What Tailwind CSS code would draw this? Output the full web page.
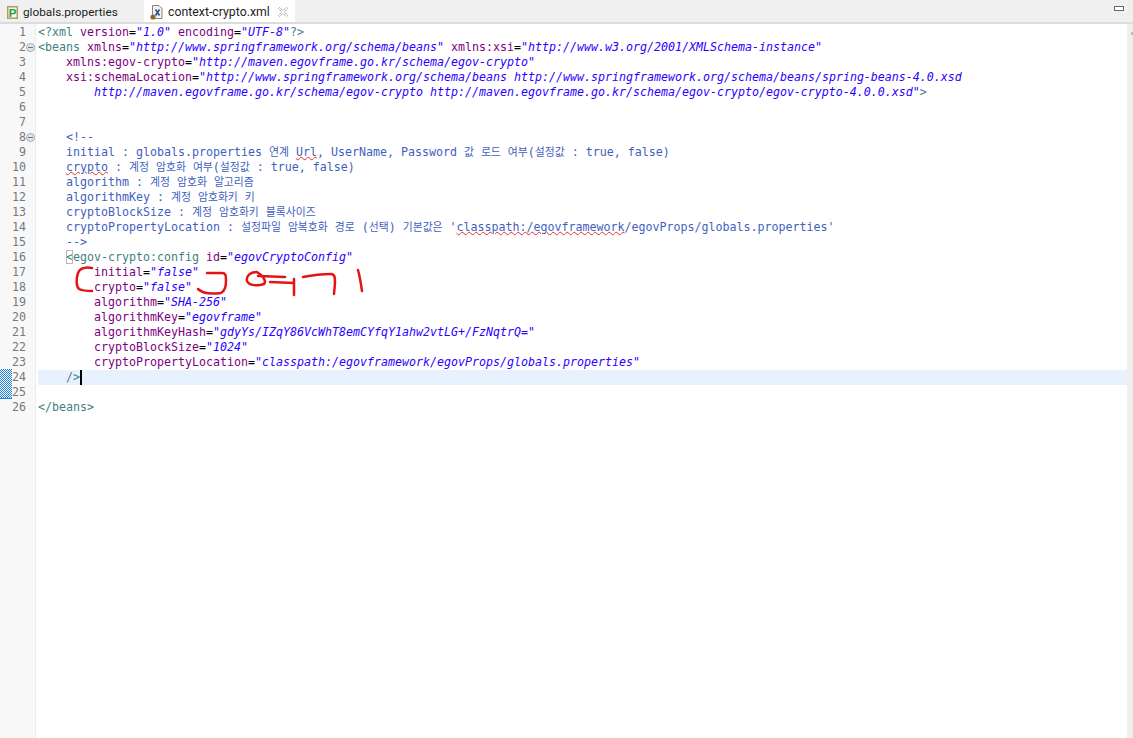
<!DOCTYPE html>
<html lang="ko">
  <head>
    <meta charset="UTF-8" />
    <title>context-crypto.xml</title>
    <script src="https://cdn.jsdelivr.net/npm/@tailwindcss/browser@4"></script>
  </head>
  <body class="h-[738px] w-[1133px] overflow-hidden bg-white">
    <!-- tab bar -->
    <div class="flex h-6 items-stretch justify-between border-b-2 border-[#dcdcdc] bg-[#f0f0f0] font-['Roboto',sans-serif] text-[#1e1e1e]">
      <div class="flex">
        <div class="flex w-[144px] items-center pl-[7px] text-[11.8px]">
          <svg class="mt-[2px]" width="11" height="13" viewBox="0 0 11 13"><path d="M.75.75h9.500v11.500H.75z" fill="#fbfaf2" stroke="#b09a60" stroke-width="1.500"/><text x="1.800" y="10.800" font-family="Liberation Sans" font-size="11.500" font-weight="700" fill="#18a030">P</text></svg>
          <span class="ml-[5px] mt-[3px]">globals.properties</span>
        </div>
        <div class="flex w-[151px] items-center bg-white pl-[6px] text-[12.3px]">
          <svg class="mt-px" width="14" height="16" viewBox="0 0 14 16"><path d="M2.500 1.500h6.500l3 3v10h-9.500z" fill="#f2f3f0" stroke="#8f8668"/><path d="M5.500 5.500l4 6M9.500 5.500l-4 6" stroke="#2b4f8a" stroke-width="1.600"/><circle cx="3" cy="13" r="2.600" fill="#9a5f32"/></svg>
          <span class="ml-[4px] mt-[3px]">context-crypto.xml</span>
          <svg class="ml-[8px] mt-[2px]" width="10" height="10" viewBox="0 0 10 10"><path d="M1.500.5L5 3.500 8.500.5l1 1L6.500 5l3 3.500-1 1L5 6.500 1.500 9.500l-1-1L3.500 5 .5 1.500z" fill="#fff" stroke="#8a8a8a" stroke-width=".8" stroke-dasharray="1.500 .6"/></svg>
        </div>
      </div>
      <div class="flex items-start pr-[9px] pt-[6px]">
        <div class="h-[5px] w-[10px] border border-[#666666] bg-white"></div>
      </div>
    </div>

    <!-- editor -->
    <div class="relative flex h-[714px] font-['DejaVu_Sans_Mono','Noto_Sans_CJK_KR',monospace] text-[11.63px] leading-[15px]">
      <!-- left ruler -->
      <div class="w-3 bg-[#f8f8f8] pt-[345px]">
        <div class="h-[30px] border-b border-[#1f80e8] bg-[repeating-conic-gradient(#1f80e8_0_25%,#ffffff_0_50%)] bg-[length:2px_2px]"></div>
      </div>
      <!-- line numbers -->
      <div class="w-[14px] bg-[#f8f8f8] pt-px text-right text-[#787878]">
        <div>1</div><div>2</div><div>3</div><div>4</div><div>5</div><div>6</div><div>7</div><div>8</div><div>9</div><div>10</div><div>11</div><div>12</div><div>13</div>
        <div>14</div><div>15</div><div>16</div><div>17</div><div>18</div><div>19</div><div>20</div><div>21</div><div>22</div><div>23</div><div>24</div><div>25</div><div>26</div>
      </div>
      <!-- folding -->
      <div class="w-[10px] border-r border-[#ececec] bg-[#f8f8f8] pt-4">
        <div class="flex h-[15px] items-center"><div class="flex size-[9px] items-center justify-center rounded-full border border-[#a0acb8] bg-[#dfe5ea]"><div class="h-px w-[5px] bg-[#66727e]"></div></div></div>
        <div class="mt-[75px] flex h-[15px] items-center"><div class="flex size-[9px] items-center justify-center rounded-full border border-[#a0acb8] bg-[#dfe5ea]"><div class="h-px w-[5px] bg-[#66727e]"></div></div></div>
      </div>
      <!-- code -->
      <div class="ml-0.5 flex flex-1 flex-col pt-px whitespace-pre text-[#3f5fbf]">
        <div class="h-[15px] text-[#3f7f7f]">&lt;?xml <span class="text-[#7f007f]">version</span><span class="text-black">=</span><span class="text-[#2a00ff] italic">"1.0"</span> <span class="text-[#7f007f]">encoding</span><span class="text-black">=</span><span class="text-[#2a00ff] italic">"UTF-8"</span>?&gt;</div>
        <div class="h-[15px] text-[#3f7f7f]">&lt;beans <span class="text-[#7f007f]">xmlns</span><span class="text-black">=</span><span class="text-[#2a00ff] italic">"http://www.springframework.org/schema/beans"</span> <span class="text-[#7f007f]">xmlns:xsi</span><span class="text-black">=</span><span class="text-[#2a00ff] italic">"http://www.w3.org/2001/XMLSchema-instance"</span></div>
        <div class="h-[15px] text-[#7f007f]">    xmlns:egov-crypto<span class="text-black">=</span><span class="text-[#2a00ff] italic">"http://maven.egovframe.go.kr/schema/egov-crypto"</span></div>
        <div class="h-[15px] text-[#7f007f]">    xsi:schemaLocation<span class="text-black">=</span><span class="text-[#2a00ff] italic">"http://www.springframework.org/schema/beans http://www.springframework.org/schema/beans/spring-beans-4.0.xsd</span></div>
        <div class="h-[15px] text-[#2a00ff] italic">        http://maven.egovframe.go.kr/schema/egov-crypto http://maven.egovframe.go.kr/schema/egov-crypto/egov-crypto-4.0.0.xsd"<span class="text-[#3f7f7f] not-italic">&gt;</span></div>
        <div class="h-[15px]"></div>
        <div class="h-[15px]"></div>
        <div class="h-[15px]">    &lt;!--</div>
        <div class="h-[15px]">    initial : globals.properties <span class="text-[10.85px]">연계</span> <span class="underline decoration-[#e03030] decoration-wavy decoration-1 underline-offset-0">Url</span>, UserName, Password <span class="text-[10.85px]">값</span> <span class="text-[10.85px]">로드</span> <span class="text-[10.85px]">여부</span>(<span class="text-[10.85px]">설정값</span> : true, false)</div>
        <div class="h-[15px]">    <span class="underline decoration-[#e03030] decoration-wavy decoration-1 underline-offset-0">crypto</span> : <span class="text-[10.85px]">계정</span> <span class="text-[10.85px]">암호화</span> <span class="text-[10.85px]">여부</span>(<span class="text-[10.85px]">설정값</span> : true, false)</div>
        <div class="h-[15px]">    algorithm : <span class="text-[10.85px]">계정</span> <span class="text-[10.85px]">암호화</span> <span class="text-[10.85px]">알고리즘</span></div>
        <div class="h-[15px]">    algorithmKey : <span class="text-[10.85px]">계정</span> <span class="text-[10.85px]">암호화키</span> <span class="text-[10.85px]">키</span></div>
        <div class="h-[15px]">    cryptoBlockSize : <span class="text-[10.85px]">계정</span> <span class="text-[10.85px]">암호화키</span> <span class="text-[10.85px]">블록사이즈</span></div>
        <div class="h-[15px]">    cryptoPropertyLocation : <span class="text-[10.85px]">설정파일</span> <span class="text-[10.85px]">암복호화</span> <span class="text-[10.85px]">경로</span> (<span class="text-[10.85px]">선택</span>) <span class="text-[10.85px]">기본값은</span> '<span class="underline decoration-[#e03030] decoration-wavy decoration-1 underline-offset-0">classpath:/egovframework</span>/egovProps/globals.properties'</div>
        <div class="h-[15px]">    --&gt;</div>
        <div class="h-[15px] text-[#3f7f7f]">    <span class="outline-1 -outline-offset-1 outline-[#b8b8b8]">&lt;</span>egov-crypto:config <span class="text-[#7f007f]">id</span><span class="text-black">=</span><span class="text-[#2a00ff] italic">"egovCryptoConfig"</span></div>
        <div class="h-[15px] text-[#7f007f]">        initial<span class="text-black">=</span><span class="text-[#2a00ff] italic">"false"</span></div>
        <div class="h-[15px] text-[#7f007f]">        crypto<span class="text-black">=</span><span class="text-[#2a00ff] italic">"false"</span></div>
        <div class="h-[15px] text-[#7f007f]">        algorithm<span class="text-black">=</span><span class="text-[#2a00ff] italic">"SHA-256"</span></div>
        <div class="h-[15px] text-[#7f007f]">        algorithmKey<span class="text-black">=</span><span class="text-[#2a00ff] italic">"egovframe"</span></div>
        <div class="h-[15px] text-[#7f007f]">        algorithmKeyHash<span class="text-black">=</span><span class="text-[#2a00ff] italic">"gdyYs/IZqY86VcWhT8emCYfqY1ahw2vtLG+/FzNqtrQ="</span></div>
        <div class="h-[15px] text-[#7f007f]">        cryptoBlockSize<span class="text-black">=</span><span class="text-[#2a00ff] italic">"1024"</span></div>
        <div class="h-[15px] text-[#7f007f]">        cryptoPropertyLocation<span class="text-black">=</span><span class="text-[#2a00ff] italic">"classpath:/egovframework/egovProps/globals.properties"</span></div>
        <div class="h-[15px] bg-[#e8f2fe] text-[#3f7f7f]">    /&gt;<span class="inline-block h-[15px] w-0.5 bg-black align-top"></span></div>
        <div class="h-[15px]"></div>
        <div class="h-[15px] text-[#3f7f7f]">&lt;/beans&gt;</div>
      </div>
      <!-- overview ruler -->
      <div class="w-1.5 bg-[#efefef] pt-2">
        <div class="ml-auto h-[3px] w-0.5 bg-[#bdbdbd]"></div>
      </div>
    </div>

    <!-- red pen note drawn over the editor -->
    <svg class="absolute left-0 top-0" width="1133" height="738" fill="none" stroke="#e41414" stroke-width="2.500" stroke-linecap="round" stroke-linejoin="round">
      <path d="M92 268C86 267 80 268 78 273C76 279 76 286 79 289C83 291 88 291 92 291"/>
      <path d="M207 273L222 273C226 273 226 276 226 281C226 287 225 291 221 293C213 294 203 294 198 289"/>
      <path d="M257 272C250 272 246 276 247 281C249 286 258 286 264 284C267 281 262 275 257 272ZM258 276L285 277M270 282L294 283M294 279L294 295"/>
      <path d="M303 277C313 275 324 274 331 274C335 274 335 278 335 283L334 294"/>
      <path d="M358 270C360 277 361 284 362 291"/>
    </svg>
  </body>
</html>
